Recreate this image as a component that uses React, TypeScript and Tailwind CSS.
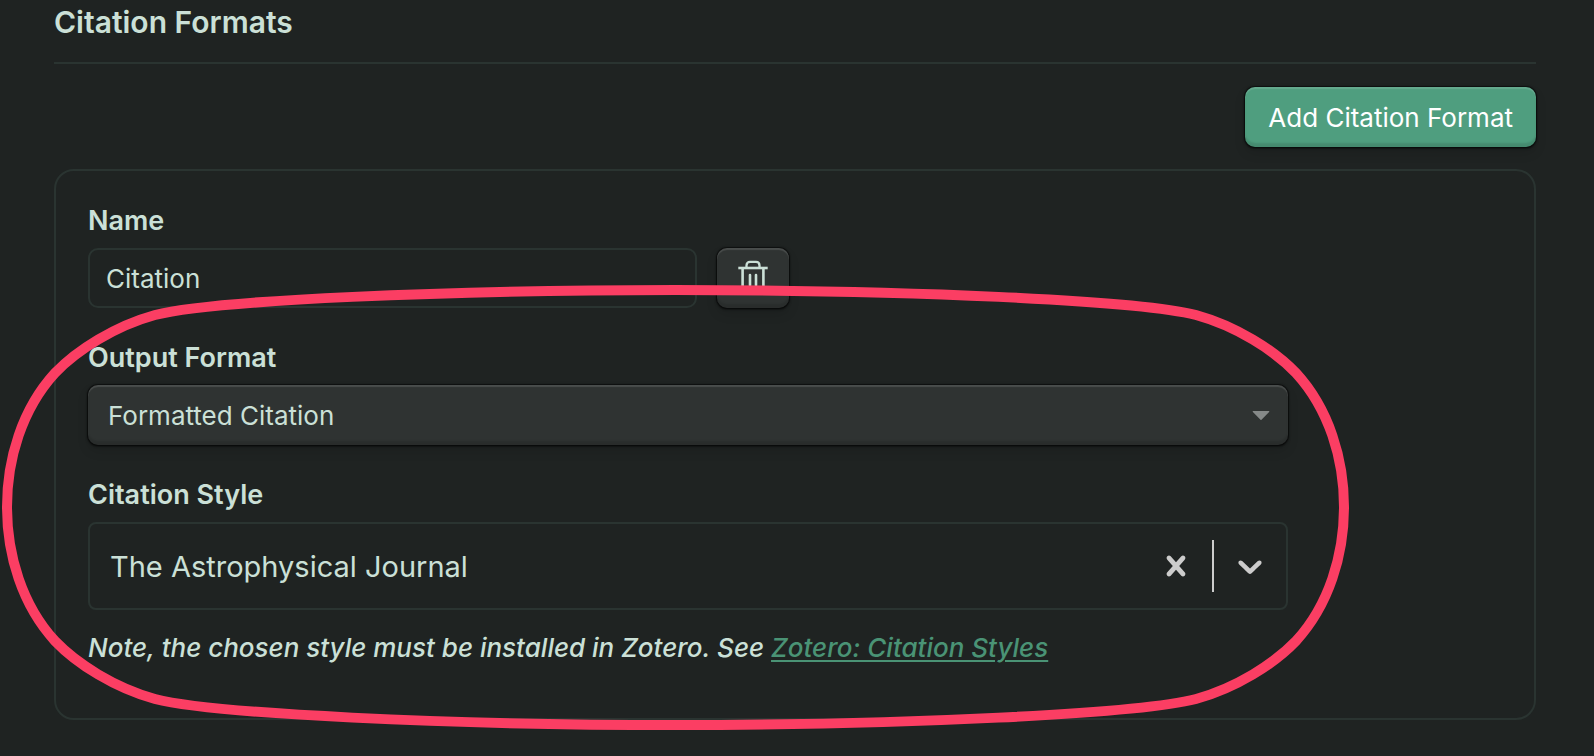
import { useState } from "react";

const raised =
  "shadow-[inset_0_2px_1px_rgba(255,255,255,0.13),inset_0_-4px_2px_rgba(0,0,0,0.12),0_0_1px_1px_rgba(0,0,0,0.5),0_1px_2px_1px_rgba(0,0,0,0.35),0_6px_12px_rgba(0,0,0,0.12)]";

const label = "text-[27px] leading-[35px] font-semibold";

function TrashIcon() {
  return (
    <svg width="32" height="36" viewBox="0 0 32 36" fill="none" stroke="currentColor" strokeWidth="2.6" aria-hidden="true">
      <path d="M1.300 9h29.400" />
      <path d="M9.500 9V6.500c0-2.600 1.400-3.600 3.500-3.600h6c2.100 0 3.500 1 3.500 3.600V9" strokeWidth="2.300" />
      <path d="M5.600 9v20.500c0 1.600 1 2.500 2.500 2.500h15.800c1.500 0 2.500-.9 2.500-2.500V9" />
      <path d="M13 16v10.500M19 16v10.500" strokeLinecap="round" />
    </svg>
  );
}

function ClearIcon() {
  return (
    <svg className="size-10" viewBox="0 0 20 20" fill="currentColor" aria-hidden="true">
      <path d="M14.348 14.849c-0.469 0.469-1.229 0.469-1.697 0l-2.651-3.030-2.651 3.029c-0.469 0.469-1.229 0.469-1.697 0-0.469-0.469-0.469-1.229 0-1.697l2.758-3.15-2.759-3.152c-0.469-0.469-0.469-1.228 0-1.697s1.228-0.469 1.697 0l2.652 3.031 2.651-3.031c0.469-0.469 1.228-0.469 1.697 0s0.469 1.229 0 1.697l-2.758 3.152 2.758 3.15c0.469 0.469 0.469 1.229 0 1.698z" />
    </svg>
  );
}

function ChevronIcon() {
  return (
    <svg className="size-10" viewBox="0 0 20 20" fill="currentColor" aria-hidden="true">
      <path d="M4.516 7.548c0.436-0.446 1.043-0.481 1.576 0l3.908 3.747 3.908-3.747c0.533-0.481 1.141-0.446 1.574 0 0.436 0.445 0.408 1.197 0 1.615-0.406 0.418-4.695 4.502-4.695 4.502-0.217 0.223-0.502 0.335-0.787 0.335s-0.57-0.112-0.789-0.335c0 0-4.287-4.084-4.695-4.502s-0.436-1.17 0-1.615z" />
    </svg>
  );
}

function Highlight() {
  return (
    <svg
      className="pointer-events-none absolute top-0 left-0"
      width="1352"
      height="740"
      viewBox="0 0 1352 740"
      fill="none"
      stroke="#fb3e63"
      strokeWidth="10"
      aria-hidden="true"
    >
      <path d="M675.500 290C450 290 213 300 155 315C115 326 77 350 55 373C22 409 7 459 7 507C7 555 22 605 55 641C77 664 115 688 155 699C213 714 450 725 675.500 725C901 725 1138 714 1196 699C1236 688 1274 664 1296 641C1329 605 1344 555 1344 507C1344 459 1329 409 1296 373C1274 350 1236 326 1196 315C1138 300 901 290 675.500 290Z" />
    </svg>
  );
}

export default function App() {
  const [name, setName] = useState("Citation");
  const [style, setStyle] = useState("The Astrophysical Journal");

  return (
    <main className="relative min-h-screen overflow-hidden bg-[#1f2322] pr-[58px] pb-9 pl-[54px] font-['Inter',sans-serif] text-[26px] leading-8 text-[#cbe0d7]">
      <h2 className="border-b-2 border-[#2a3431] pt-1 pb-[22px] text-[30px] leading-9 font-semibold">Citation Formats</h2>

      <div className="flex justify-end pt-[23px] pb-[22px]">
        <button type="button" className={`h-[60px] rounded-[10px] bg-[#4f9e7f] px-[23px] pt-0.5 text-white ${raised}`}>
          Add Citation Format
        </button>
      </div>

      <section className="rounded-[20px] border-2 border-[#2a3431] px-8 pt-8 pb-[54px]">
        <div className="flex flex-col gap-8">
          <div className="flex flex-col gap-2.5">
            <label htmlFor="format-name" className={label}>Name</label>
            <div className="flex items-center gap-5">
              <input
                id="format-name"
                value={name}
                onChange={(e) => setName(e.target.value)}
                className="h-[60px] w-[609px] rounded-[10px] border-2 border-[#2a3431] bg-transparent px-4 outline-none"
              />
              <button type="button" aria-label="Delete" className={`flex h-[60px] w-[72px] justify-center rounded-[10px] bg-[#2f3332] pt-[11px] ${raised}`}>
                <TrashIcon />
              </button>
            </div>
          </div>

          <div className="flex max-w-[1200px] flex-col gap-2.5">
            <label htmlFor="output-format" className={label}>Output Format</label>
            <div className="relative">
              <select id="output-format" className={`h-[60px] w-full appearance-none rounded-[10px] bg-[#2f3332] px-5 pt-0.5 outline-none ${raised}`}>
                <option>Formatted Citation</option>
              </select>
              <svg className="pointer-events-none absolute top-[25px] right-[18px]" width="18" height="11" viewBox="0 0 18 11" fill="#858988" aria-hidden="true">
                <path d="M1.300 1h15.400c.6 0 .8.600.4 1L9.500 9.800c-.3.300-.7.300-1 0L.9 2c-.4-.4-.2-1 .4-1z" />
              </svg>
            </div>
          </div>

          <div className="flex max-w-[1200px] flex-col gap-2.5">
            <label htmlFor="citation-style" className={label}>Citation Style</label>
            <div className="flex h-[88px] items-center rounded-lg border-2 border-[#2a3431]">
              <input
                id="citation-style"
                value={style}
                onChange={(e) => setStyle(e.target.value)}
                className="min-w-0 flex-1 bg-transparent pt-0.5 pl-5 text-[29px] leading-9 outline-none"
              />
              <button type="button" aria-label="Clear" onClick={() => setStyle("")} className="p-4 text-[#cccccc]">
                <ClearIcon />
              </button>
              <span className="my-4 w-0.5 self-stretch bg-[#cccccc]" />
              <button type="button" aria-label="Show styles" className="p-4 text-[#cccccc]">
                <ChevronIcon />
              </button>
            </div>
            <p className="pt-3 font-medium italic">
              Note, the chosen style must be installed in Zotero. See{" "}
              <a href="#citation-styles" className="text-[#4a9375] underline decoration-2 underline-offset-3">Zotero: Citation Styles</a>
            </p>
          </div>
        </div>
      </section>
      <Highlight />
    </main>
  );
}
